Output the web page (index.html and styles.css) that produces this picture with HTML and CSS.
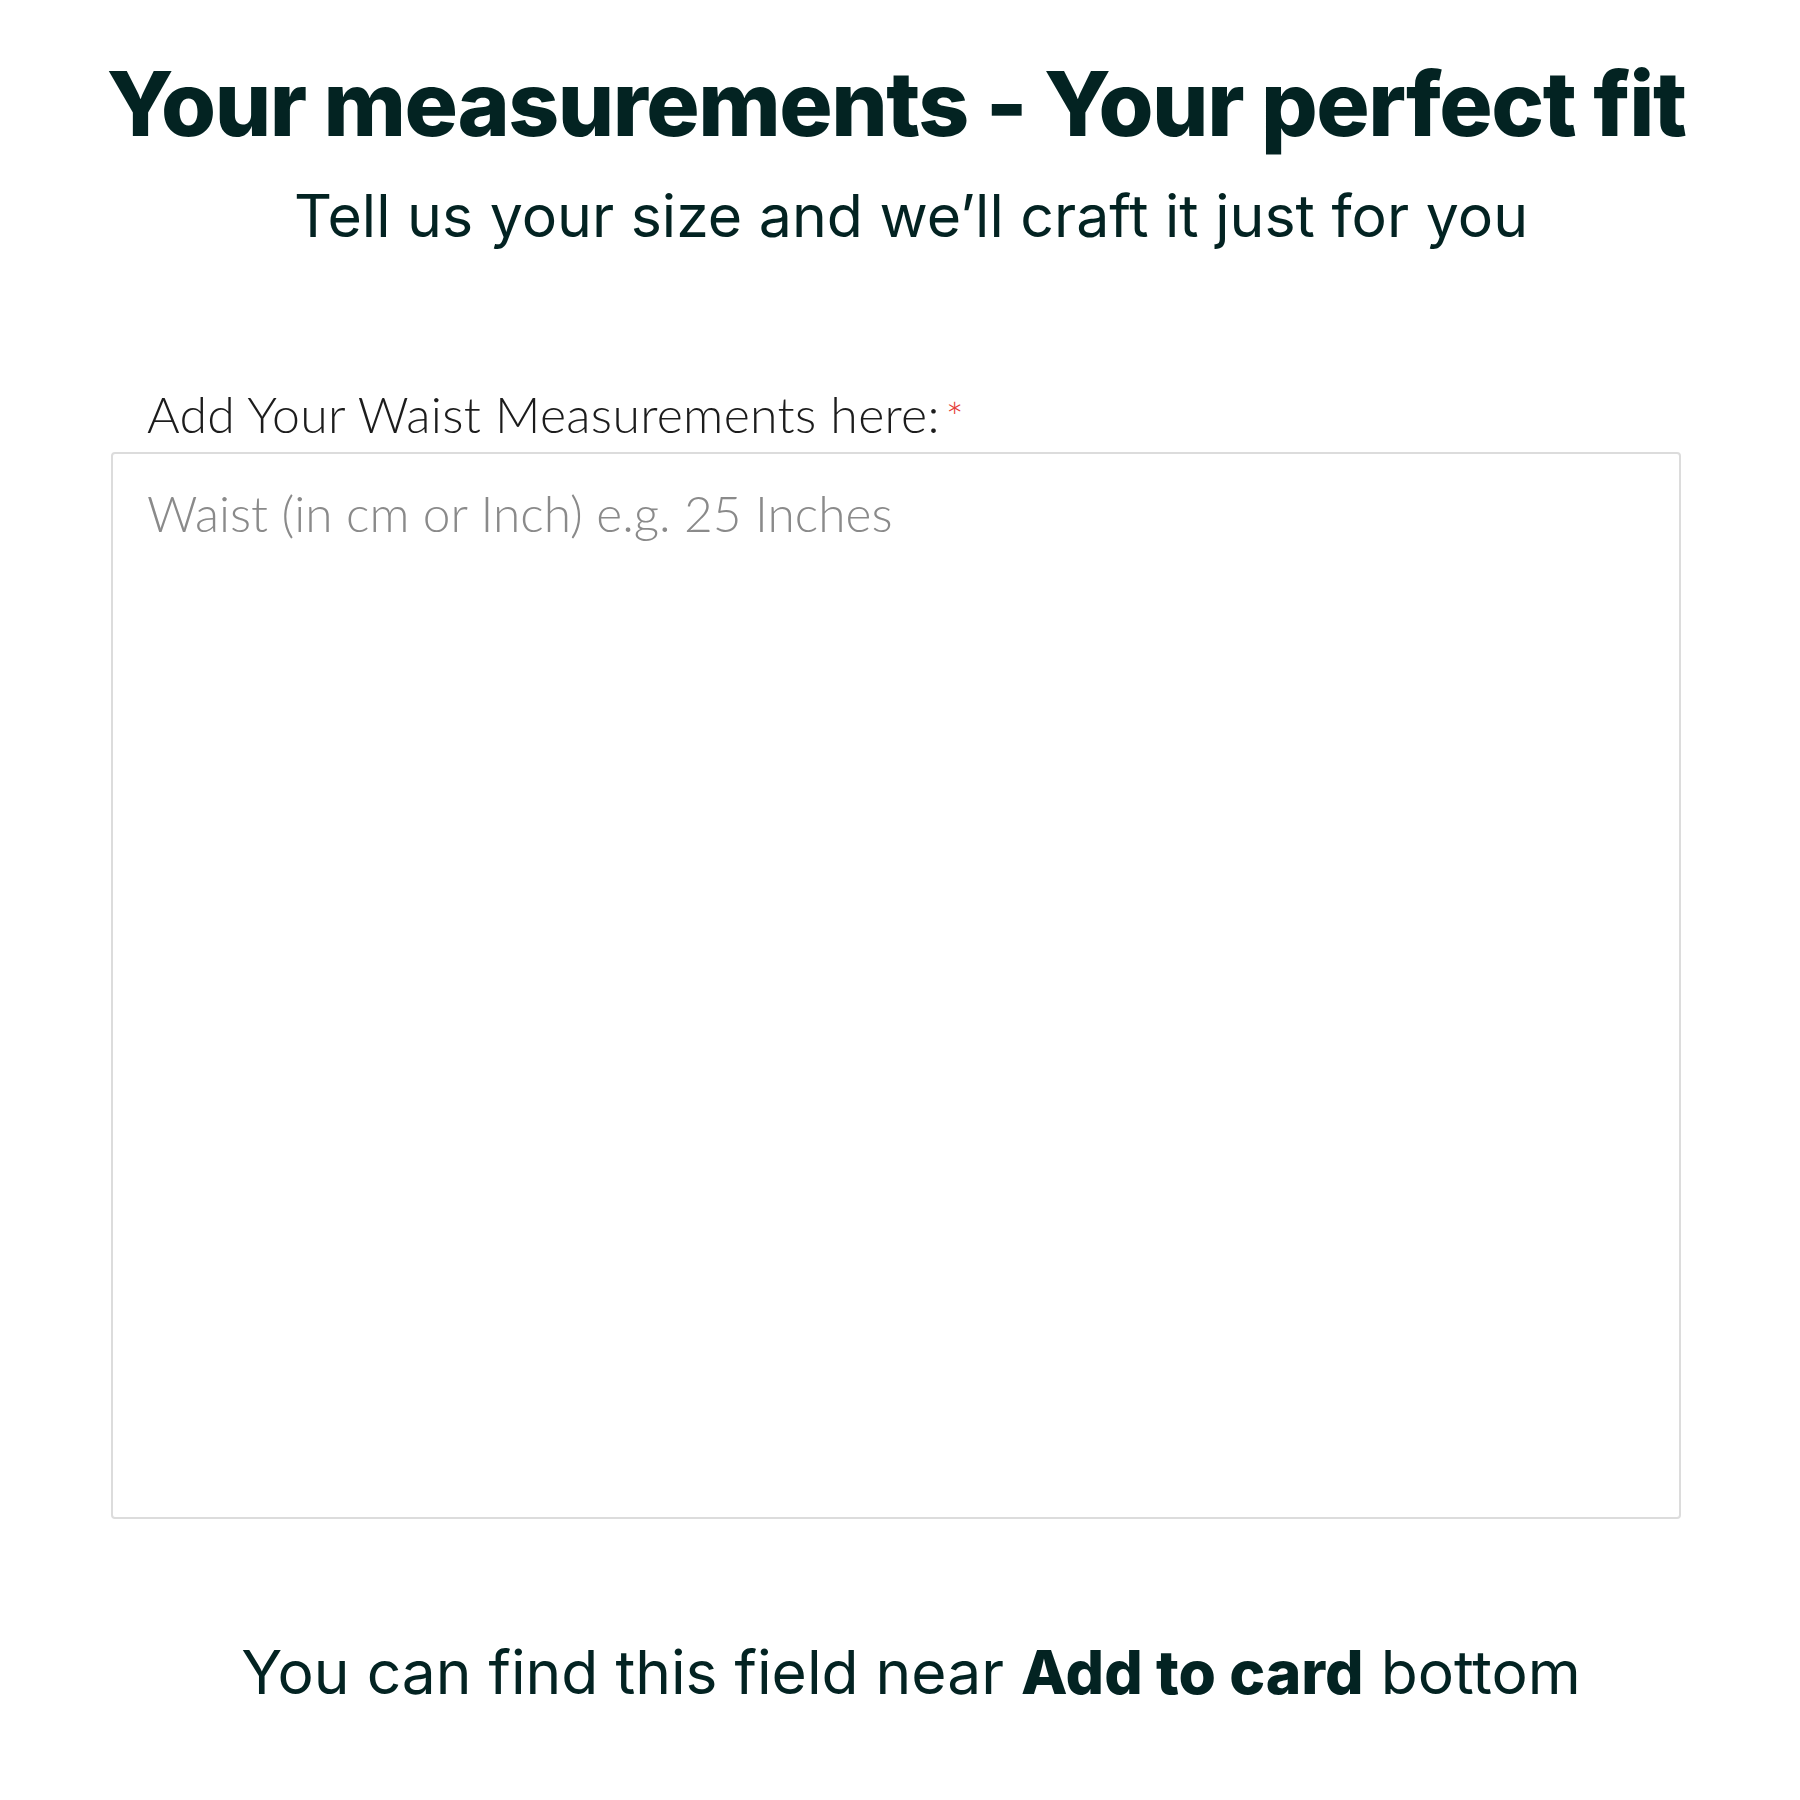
FILE: index.html
```html
<!DOCTYPE html>
<html lang="en">
<head>
<meta charset="utf-8">
<title>Your measurements</title>
<link rel="stylesheet" href="styles.css">
</head>
<body>
<main class="page">
  <header class="intro">
    <h1 class="title">Your measurements - Your perfect fit</h1>
    <p class="subtitle">Tell us your size and we’ll craft it just for you</p>
  </header>
  <section class="field">
    <label class="label" for="waist">Add Your Waist Measurements here:<span class="req">*</span></label>
    <textarea id="waist" class="input" placeholder="Waist (in cm or Inch) e.g. 25 Inches"></textarea>
  </section>
  <p class="note">You can find this field near <strong>Add to card</strong> bottom</p>
</main>
</body>
</html>
```
FILE: styles.css
```css
html, body {
  margin: 0;
  padding: 0;
  background: #ffffff;
}
.page {
  width: 1570px;
  margin: 0 0 0 111px;
  color: #032322;
  font-family: Inter, "Noto Sans", sans-serif;
}
.intro {
  display: flex;
  flex-direction: column;
  align-items: center;
}
.title {
  margin: 54px 0 0;
  font-size: 89px;
  line-height: 100px;
  font-weight: 800;
  letter-spacing: -1.5px;
  white-space: nowrap;
}
.subtitle {
  margin: 26px 0 0 30px;
  font-size: 59px;
  line-height: 72px;
  font-weight: 400;
  white-space: nowrap;
}
.field {
  display: flex;
  flex-direction: column;
  margin-top: 134px;
}
.label {
  font-family: Lato, "Open Sans", sans-serif;
  font-weight: 300;
  font-size: 50px;
  line-height: 56px;
  letter-spacing: 0.3px;
  color: #1c1c1c;
  padding-left: 36px;
  margin-bottom: 7px;
}
.req {
  color: #e53935;
  margin-left: 6px;
  font-size: 42px;
}
.input {
  box-sizing: border-box;
  width: 1570px;
  height: 1067px;
  border: 2px solid #dcdcdc;
  border-radius: 4px;
  padding: 31px 34px;
  resize: none;
  font-family: Lato, "Open Sans", sans-serif;
  font-weight: 300;
  font-size: 49.6px;
  line-height: 56px;
  color: #333;
}
.input::placeholder {
  color: #8a8a8a;
}
.note {
  margin: 117px 0 0 30px;
  text-align: center;
  font-size: 60.5px;
  line-height: 72px;
  font-weight: 400;
  white-space: nowrap;
}
.note strong {
  font-weight: 800;
}
```
